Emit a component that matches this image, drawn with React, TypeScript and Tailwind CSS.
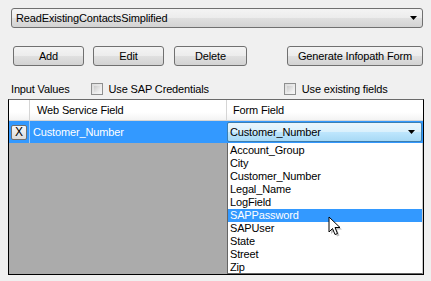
import React from 'react';

const font = "font-['Liberation_Sans',Arial,sans-serif] text-[11px] tracking-[-0.15px]";
const btn =
  'h-[20px] border border-[#707070] rounded-[3px] bg-[linear-gradient(to_bottom,#f4f4f4_0%,#ececec_50%,#e0e0e0_51%,#d3d3d3_100%)] text-black flex items-center';

const Arrow = () => (
  <svg width="8" height="4" viewBox="0 0 8 4">
    <path d="M0 0H7L3.5 4Z" fill="#000" />
  </svg>
);

const Check = ({ label }: { label: string }) => (
  <div className="flex items-center gap-[6px]">
    <div className="w-[12px] h-[12px] border border-[#8e8f8f] bg-[linear-gradient(135deg,#dcdcdc,#f6f6f6)] p-[2px]">
      <div className="w-full h-full bg-[linear-gradient(135deg,#cbcbcb,#f4f4f4)]" />
    </div>
    <span>{label}</span>
  </div>
);

const items = [
  'Account_Group',
  'City',
  'Customer_Number',
  'Legal_Name',
  'LogField',
  'SAPPassword',
  'SAPUser',
  'State',
  'Street',
  'Zip',
];

export default function App() {
  return (
    <div className={`w-[431px] h-[281px] bg-[#f0f0f0] text-black ${font} overflow-hidden`}>
      <div className="pt-[8px] pl-[11px]">
        <div className={`${btn} w-[412px] justify-between pl-[4px] pr-[4px]`}>
          <span>ReadExistingContactsSimplified</span>
          <Arrow />
        </div>
      </div>

      <div className="flex mt-[18px] pl-[13px]">
        <div className={`${btn} justify-center w-[71px]`}>Add</div>
        <div className={`${btn} justify-center w-[71px] ml-[9px]`}>Edit</div>
        <div className={`${btn} justify-center w-[73px] ml-[10px]`}>Delete</div>
        <div className={`${btn} justify-center w-[136px] ml-[40px]`}>Generate Infopath Form</div>
      </div>

      <div className="flex items-start h-[33px] pl-[11px]">
        <span className="mt-[17px] leading-[13px]">Input Values</span>
        <div className="ml-[21px] mt-[15px]">
          <Check label="Use SAP Credentials" />
        </div>
        <div className="ml-[75px] mt-[15px]">
          <Check label="Use existing fields" />
        </div>
      </div>

      <div className="relative ml-[8px] w-[416px] h-[176px] border border-black border-t-[#6a6a6a] bg-[#ababab] flex flex-col">
        <div className="flex h-[21px] bg-[linear-gradient(to_bottom,#ffffff_0%,#ffffff_60%,#f3f3f3_100%)] border-b border-[#d5d5d5]">
          <div className="w-[21px] border-r border-[#d5d5d5]" />
          <div className="w-[197px] border-r border-[#d5d5d5] flex items-center pl-[7px]">Web Service Field</div>
          <div className="flex-1 flex items-center pl-[6px]">Form Field</div>
        </div>
        <div className="flex h-[22px] bg-[#3399ff]">
          <div className="w-[21px] flex items-center justify-center border-r border-[#9cc9f5]">
            <div className="w-[16px] h-[15px] border border-[#707070] rounded-[2px] bg-[linear-gradient(to_bottom,#f6f6f6,#dcdcdc)] flex items-center justify-center text-[12px]">
              X
            </div>
          </div>
          <div className="w-[197px] flex items-center pl-[3px] text-white">Customer_Number</div>
          <div className="flex-1 pr-[1px] py-[1px]">
            <div className="h-full border border-[#3c7fb1] rounded-[2px] bg-[linear-gradient(to_bottom,#eaf6fd_0%,#d9f0fc_50%,#bee6fd_51%,#a7d9f5_100%)] flex items-center justify-between pl-[2px] pr-[5px]">
              <span>Customer_Number</span>
              <Arrow />
            </div>
          </div>
        </div>

        <div className="absolute left-[218px] top-[43px] w-[196px] h-[131px] bg-white border border-[#646464] border-t-0 border-r-[#c8c8c8] flex flex-col pt-[1px]">
          {items.map(it => (
            <div
              key={it}
              className={`h-[13px] leading-[13px] pl-[2px] ${it === 'SAPPassword' ? 'bg-[#3399ff] text-white' : ''}`}
            >
              {it}
            </div>
          ))}
          <svg className="absolute left-[100px] top-[73px]" width="14" height="21" viewBox="0 0 14 21">
            <path d="M2 2V17L5.5 13.5L8 19.5L10.5 18.5L8 12.5H13Z" fill="#000" opacity="0.25" transform="translate(1 1)" />
            <path d="M1 1V16L4.5 12.5L7 18.5L9.5 17.5L7 11.5H12Z" fill="#fff" stroke="#000" strokeWidth="1" strokeLinejoin="round" />
          </svg>
        </div>
      </div>
    </div>
  );
}
